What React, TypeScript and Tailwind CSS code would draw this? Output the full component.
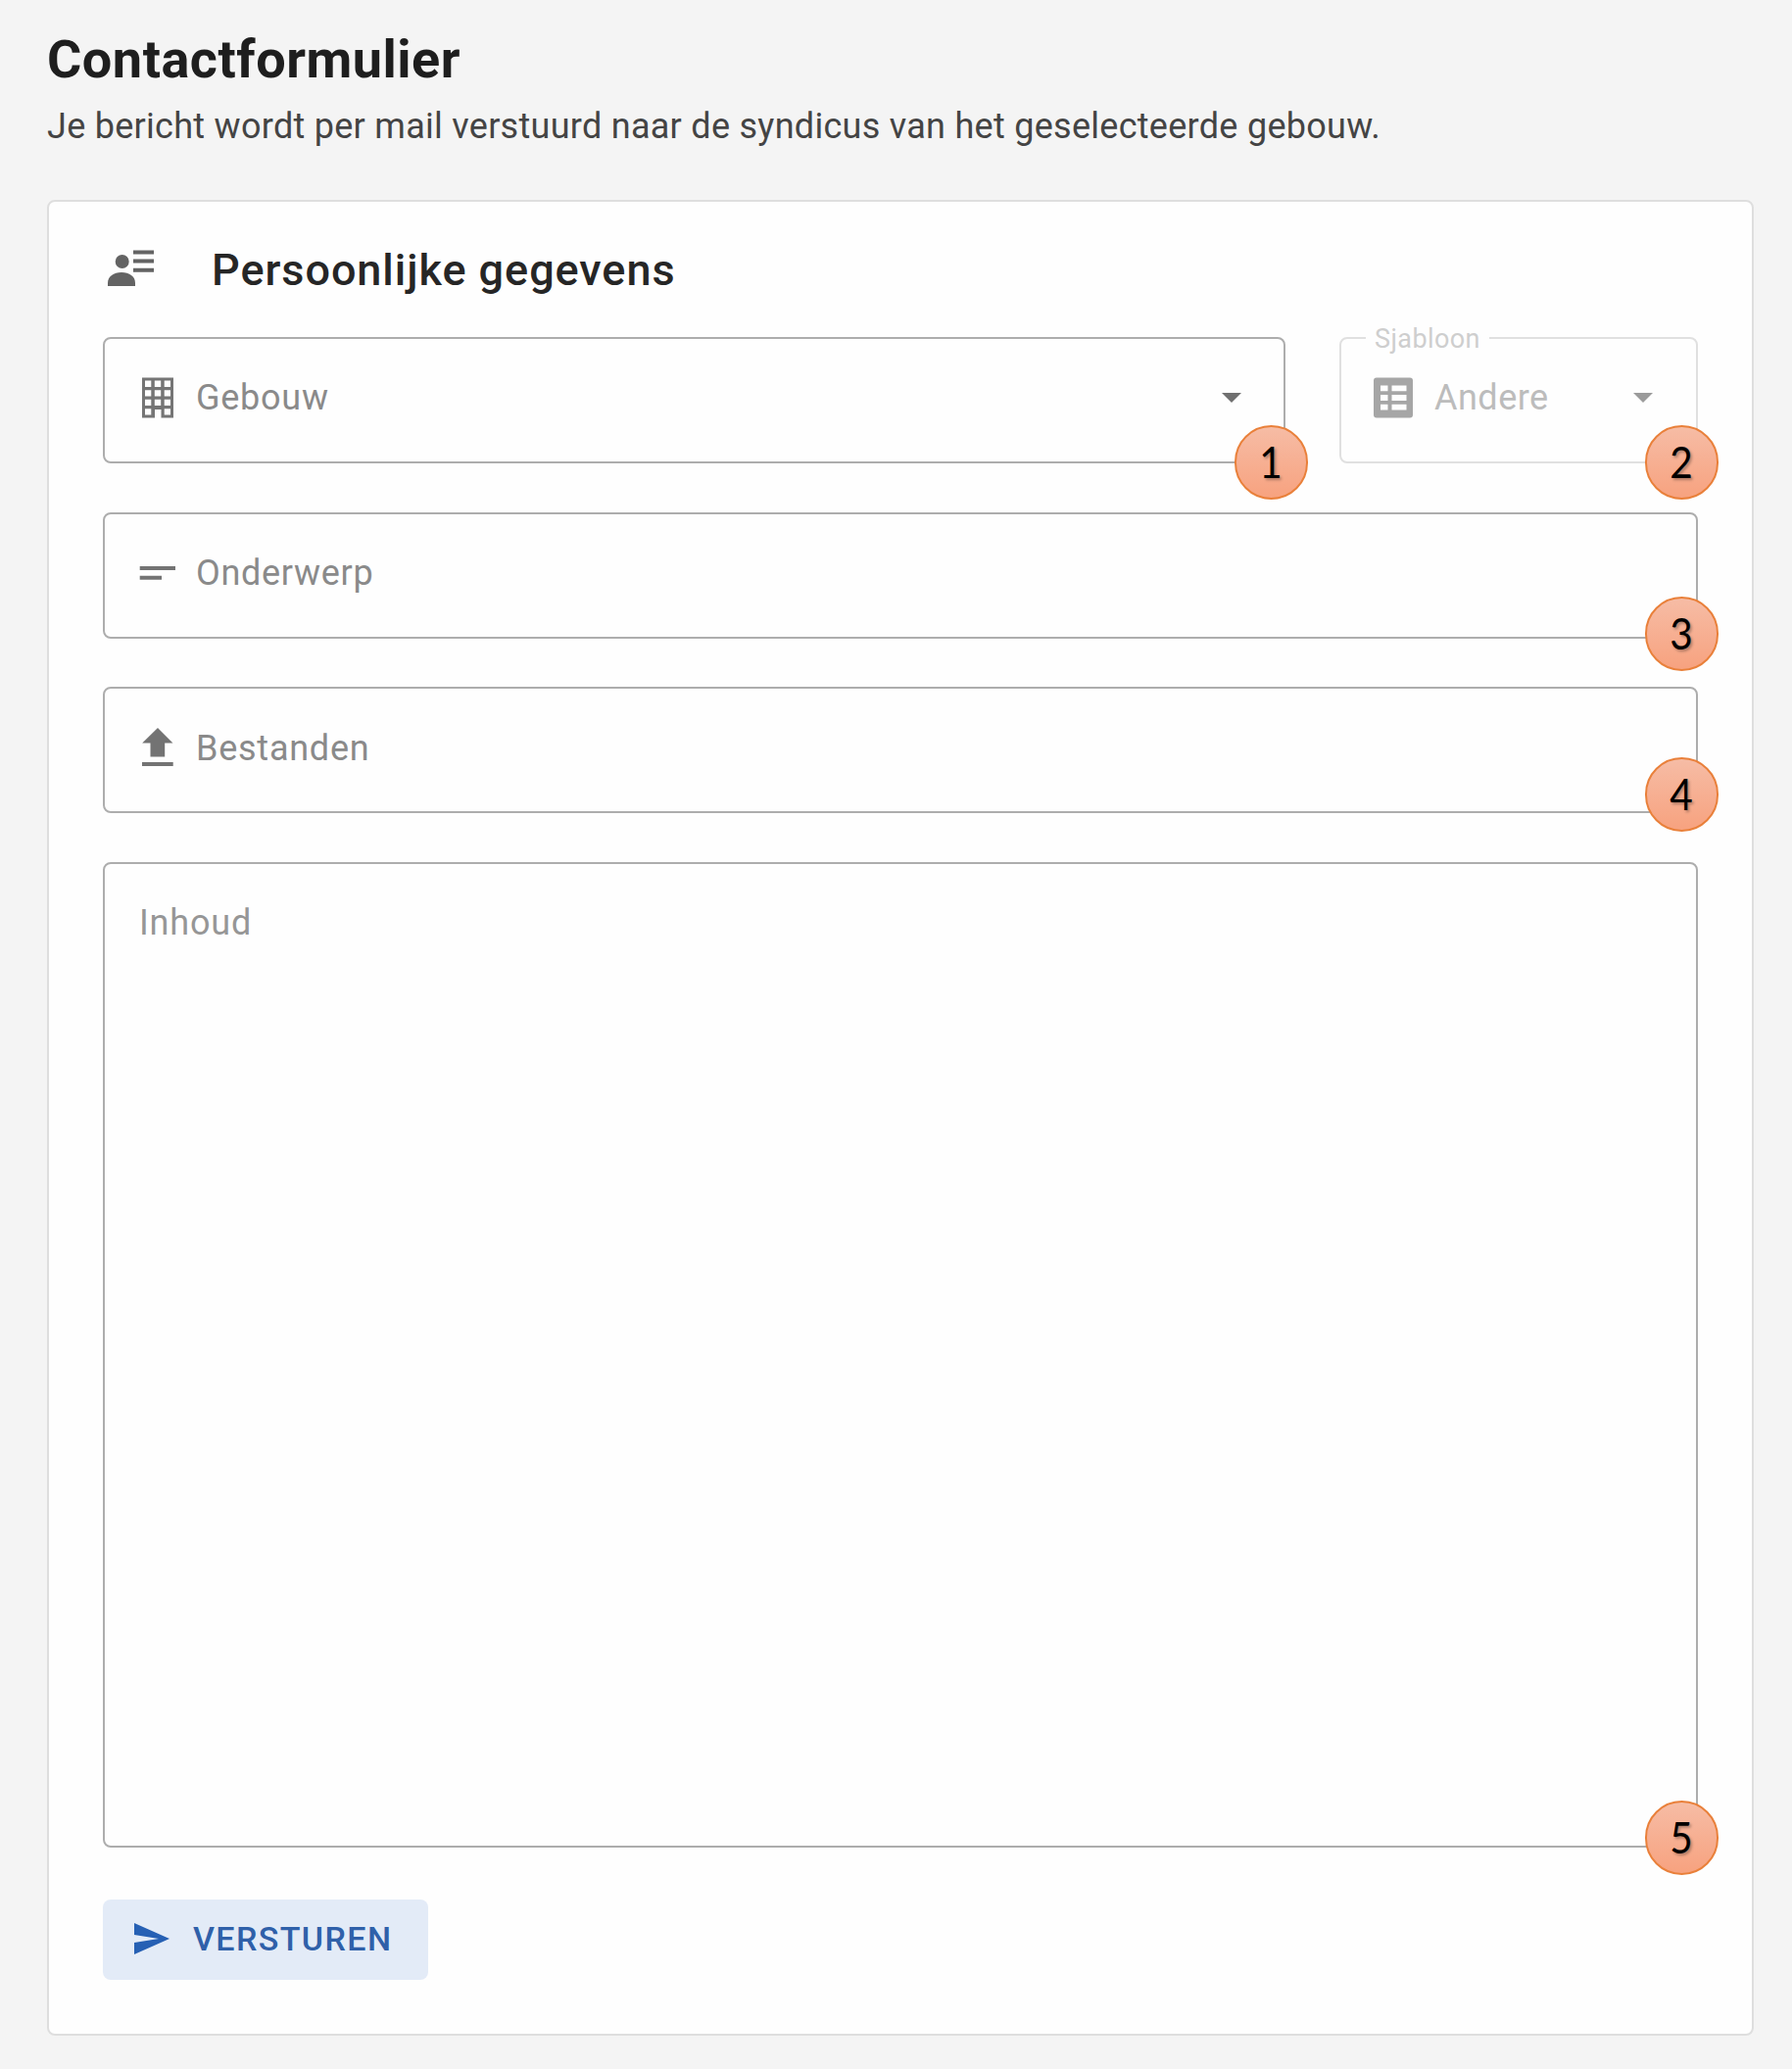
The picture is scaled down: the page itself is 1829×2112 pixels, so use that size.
import type { ReactNode } from "react";

function Badge({ n, className }: { n: number; className: string }) {
  return (
    <span
      className={`absolute z-10 flex h-[76px] w-[75px] items-center justify-center rounded-full border-2 border-[#e9803a] bg-linear-to-b from-[#f6bca5] to-[#f7a27f] font-[Lato,sans-serif] text-[45px] leading-none text-black ${className}`}
    >
      <span className="scale-x-90 pb-px [text-shadow:2px_2px_3px_rgba(0,0,0,0.3)]">{n}</span>
    </span>
  );
}

function Field({ children, className = "" }: { children: ReactNode; className?: string }) {
  return (
    <div className={`relative flex items-center rounded-[8px] border-2 pb-[6px] pl-[34px] ${className}`}>
      {children}
    </div>
  );
}

function Label({ children, className = "" }: { children: ReactNode; className?: string }) {
  return <span className={`text-[36px] leading-[44px] whitespace-nowrap ${className}`}>{children}</span>;
}

function Icon({ children, className = "" }: { children: ReactNode; className?: string }) {
  return (
    <svg viewBox="0 0 40 44" className={`h-[44px] w-[40px] shrink-0 ${className}`} fill="currentColor">
      {children}
    </svg>
  );
}

function Caret({ className }: { className: string }) {
  return (
    <svg viewBox="0 0 20 10" className={`h-[10px] w-[20px] ${className}`} fill="currentColor">
      <path d="M0 0H20L10 10Z" />
    </svg>
  );
}

export default function App() {
  return (
    <div className="h-[2112px] w-[1829px] bg-[#f4f4f4] pl-[48px] font-[Roboto,sans-serif]">
      <header className="flex h-[204px] flex-col pt-[29px]">
        <h1 className="text-[54px] leading-[64px] font-bold tracking-[0.52px] whitespace-nowrap text-[#1e1e1e]">
          Contactformulier
        </h1>
        <p className="mt-[11px] pt-px text-[36px] leading-[48px] tracking-[0.28px] whitespace-nowrap text-[#444444]">
          Je bericht wordt per mail verstuurd naar de syndicus van het geselecteerde gebouw.
        </p>
      </header>

      <main className="flex h-[1874px] w-[1742px] flex-col rounded-[8px] border-2 border-[#dedede] bg-[#fefefe] pl-[55px]">
        <div className="flex h-[138px] shrink-0 items-center">
          <svg viewBox="0 0 48 40" className="mb-[2px] ml-[5px] h-[40px] w-[48px]" fill="#636363">
            <circle cx="14.7" cy="13" r="7" />
            <path d="M0 38V35C0 28 6 24 14 24S28 28 28 35V38Z" />
            <path d="M26 1.500H47V5.500H26ZM26 10.500H47V14.500H26ZM26 19.700H47V23.700H26Z" />
          </svg>
          <h2 className="ml-[58px] pt-px text-[45px] leading-[56px] font-medium tracking-[0.95px] whitespace-nowrap text-[#262626]">
            Persoonlijke gegevens
          </h2>
        </div>

        <div className="flex shrink-0 gap-[55px]">
          <Field className="h-[129px] w-[1207px] border-[#adadad]">
            <Icon className="text-[#757575]">
              <path
                fillRule="evenodd"
                d="M4 1.500H36V42.500H23.500V34H17V42.500H4ZM7 4.500V11H13.300V4.500ZM16.800 4.500V11H23.200V4.500ZM26.700 4.500V11H33V4.500ZM7 14.200V20.500H13.300V14.200ZM16.800 14.200V20.500H23.200V14.200ZM26.700 14.200V20.500H33V14.200ZM7 23.700V30H13.300V23.700ZM16.800 23.700V30H23.200V23.700ZM26.700 23.700V30H33V23.700ZM7 33.200V39.500H13.300V33.200ZM26.700 33.200V39.500H33V33.200Z"
              />
            </Icon>
            <Label className="ml-[19px] tracking-[0.75px] text-[#8a8a8a]">Gebouw</Label>
            <Caret className="mr-[43px] ml-auto text-[#707070]" />
            <Badge n={1} className="right-[-25px] bottom-[-39px]" />
          </Field>
          <Field className="h-[129px] w-[366px] border-[#e0e0e0]">
            <span className="absolute top-[-16px] left-[25px] bg-[#fefefe] px-[9px] text-[27px] leading-[32px] tracking-[0.4px] text-[#cecece]">
              Sjabloon
            </span>
            <Icon className="-ml-px text-[#a6a6a6]">
              <path
                fillRule="evenodd"
                d="M3 1.500H37Q40 1.500 40 4.500V39.500Q40 42.500 37 42.500H3Q0 42.500 0 39.500V4.500Q0 1.500 3 1.500ZM7 9.500V15.300H14.500V9.500ZM18.500 9.500V15.300H33.500V9.500ZM7 19V25H14.500V19ZM18.500 19V25H33.500V19ZM7 28.700V34.500H14.500V28.700ZM18.500 28.700V34.500H33.500V28.700Z"
              />
            </Icon>
            <Label className="ml-[22px] tracking-[0.5px] text-[#bcbcbc]">Andere</Label>
            <Caret className="mr-[44px] ml-auto text-[#9b9b9b]" />
            <Badge n={2} className="right-[-23px] bottom-[-39px]" />
          </Field>
        </div>

        <Field className="mt-[50px] h-[129px] w-[1628px] shrink-0 border-[#adadad]">
          <Icon className="text-[#737373]">
            <path d="M1.700 15H38V19H1.700ZM1.700 24.800H24V28.800H1.700Z" />
          </Icon>
          <Label className="ml-[19px] tracking-[0.7px] text-[#8a8a8a]">Onderwerp</Label>
          <Badge n={3} className="right-[-23px] bottom-[-35px]" />
        </Field>

        <Field className="mt-[49px] h-[129px] w-[1628px] shrink-0 border-[#adadad]">
          <Icon className="text-[#737373]">
            <path d="M20 2L35.500 17.500H27.200V31.500H12.500V17.500H4.200ZM4 37H35.700V41H4Z" />
          </Icon>
          <Label className="ml-[19px] pt-[2px] tracking-[0.75px] text-[#8a8a8a]">Bestanden</Label>
          <Badge n={4} className="right-[-23px] bottom-[-21px]" />
        </Field>

        <Field className="mt-[50px] h-[1006px] w-[1628px] shrink-0 items-start border-[#adadad] pt-[38px]">
          <Label className="ml-px tracking-[0.8px] text-[#969696]">Inhoud</Label>
          <Badge n={5} className="right-[-23px] bottom-[-30px]" />
        </Field>

        <button className="mt-[53px] flex h-[82px] w-[332px] shrink-0 items-center rounded-[8px] bg-[#e3ebf7] pb-[3px] pl-[32px] text-[#2f60a9]">
          <svg viewBox="0 0 36 32" className="h-[32px] w-[36px]" fill="#2660b4">
            <path d="M0 0L36 16L0 32V20L25 16L0 12Z" />
          </svg>
          <span className="ml-[24px] pt-px text-[34px] leading-[44px] font-medium tracking-[1.4px]">VERSTUREN</span>
        </button>
      </main>
    </div>
  );
}
